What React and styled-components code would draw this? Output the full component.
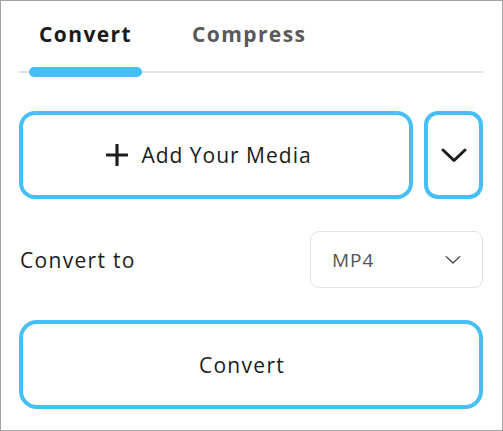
import React, { useState } from 'react';
import styled, { createGlobalStyle } from 'styled-components';

const blue = '#46bff7';
const line = '#dde3e8';

const GlobalStyle = createGlobalStyle`
  html, body {
    margin: 0;
    padding: 0;
    background: #fff;
  }
  * {
    box-sizing: border-box;
  }
`;

const Panel = styled.div`
  width: 503px;
  height: 431px;
  border: 1px solid #a3a3a3;
  padding: 0 19px 0 18px;
  font-family: "Open Sans", "Liberation Sans", sans-serif;
  color: #1b1b1b;
  display: flex;
  flex-direction: column;
  gap: 32px;
`;

const TabBar = styled.div`
  display: flex;
  gap: 40px;
  padding-left: 10px;
  border-bottom: 2px solid ${line};
  margin-bottom: 6px;
`;

const Tab = styled.div`
  position: relative;
  padding: 21px 10px 25px;
  font-size: 21px;
  line-height: 24px;
  font-weight: 700;
  letter-spacing: 1.4px;
  color: ${(p) => (p.active ? '#1a1a1a' : '#595959')};
  cursor: pointer;

  &::after {
    content: '';
    display: ${(p) => (p.active ? 'block' : 'none')};
    position: absolute;
    left: 0;
    right: 0;
    bottom: -6px;
    height: 10px;
    border-radius: 5px;
    background: ${blue};
  }
`;

const MediaRow = styled.div`
  display: flex;
  gap: 11px;
  height: 88px;
`;

const OutlineButton = styled.button`
  flex: ${(p) => (p.narrow ? '0 0 59px' : '1')};
  display: flex;
  align-items: center;
  justify-content: center;
  gap: 13px;
  border: 4px solid ${blue};
  border-radius: ${(p) => (p.narrow ? '14px' : '16px')};
  background: #fff;
  font-family: inherit;
  font-size: 21px;
  letter-spacing: 1px;
  color: #1b1b1b;
  padding: ${(p) => (p.narrow ? '0' : '0 14px 0 0')};
  cursor: pointer;
`;

const ConvertRow = styled.div`
  display: flex;
  align-items: center;
  justify-content: space-between;
  height: 57px;
`;

const Label = styled.span`
  font-size: 21px;
  letter-spacing: 1.3px;
  padding-left: 1px;
`;

const Select = styled.div`
  width: 173px;
  height: 57px;
  border: 1.5px solid ${line};
  border-radius: 9px;
  display: flex;
  align-items: center;
  justify-content: space-between;
  padding: 0 21px 0 21px;
  font-size: 19px;
  letter-spacing: 1px;
  color: #555;
`;

const BigButton = styled(OutlineButton)`
  flex: none;
  height: 89px;
  border-radius: 18px;
  letter-spacing: 1.3px;
  padding: 0 18px 0 0;
`;

const Chevron = ({ size = 26, stroke = 3, color = '#1d1d1d' }) => (
  <svg width={size} height={size / 2 + 2} viewBox="0 0 26 15" fill="none">
    <path d="M2 2 L13 12.5 L24 2" stroke={color} strokeWidth={stroke} strokeLinecap="round" strokeLinejoin="round" />
  </svg>
);

const Plus = () => (
  <svg width="22" height="22" viewBox="0 0 22 22" fill="none">
    <path d="M11 1 V21 M1 11 H21" stroke="#1d1d1d" strokeWidth="3.2" strokeLinecap="round" />
  </svg>
);

export default function App() {
  const [tab, setTab] = useState('convert');

  return (
    <>
      <GlobalStyle />
      <Panel>
        <TabBar>
          <Tab active={tab === 'convert'} onClick={() => setTab('convert')}>Convert</Tab>
          <Tab active={tab === 'compress'} onClick={() => setTab('compress')}>Compress</Tab>
        </TabBar>

        <MediaRow>
          <OutlineButton>
            <Plus />
            Add Your Media
          </OutlineButton>
          <OutlineButton narrow>
            <Chevron />
          </OutlineButton>
        </MediaRow>

        <ConvertRow>
          <Label>Convert to</Label>
          <Select>
            MP4
            <Chevron size={16} stroke={2.2} color="#444" />
          </Select>
        </ConvertRow>

        <BigButton>Convert</BigButton>
      </Panel>
    </>
  );
}
